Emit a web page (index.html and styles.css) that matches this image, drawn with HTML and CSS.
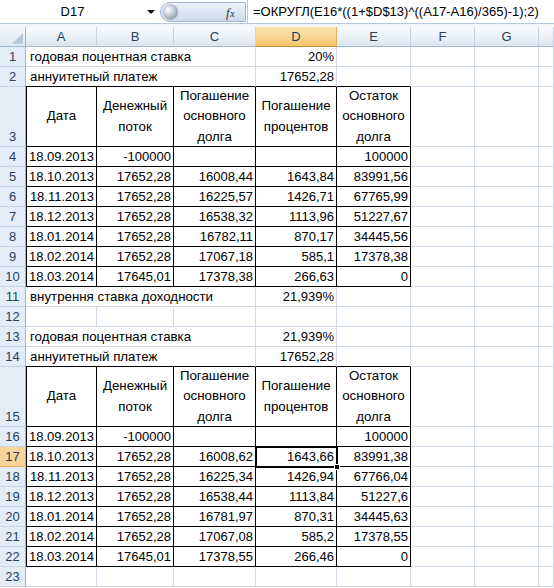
FILE: index.html
```html
<!DOCTYPE html>
<html>
<head>
<meta charset="utf-8">
<link rel="stylesheet" href="styles.css">
</head>
<body>
<div class="fbar">
  <div class="namebox">D17</div>
  <div class="ddarrow"><span class="tri"></span></div>
  <div class="pill">
    <svg width="86" height="22" viewBox="0 0 86 22">
      <defs>
        <linearGradient id="pg" x1="0" y1="0" x2="0" y2="1">
          <stop offset="0" stop-color="#eef3fa"/>
          <stop offset="1" stop-color="#cbd9ec"/>
        </linearGradient>
        <radialGradient id="cg" cx="0.35" cy="0.35" r="0.7">
          <stop offset="0" stop-color="#ffffff"/>
          <stop offset="0.5" stop-color="#c9ced6"/>
          <stop offset="1" stop-color="#8f9aa8"/>
        </radialGradient>
      </defs>
      <path d="M10 1.5 H85.5 V20.5 H10 A9.5 9.5 0 0 1 10 1.5 Z" fill="url(#pg)" stroke="#a3b7d1"/>
      <circle cx="10.5" cy="11" r="7.5" fill="url(#cg)" stroke="#b4bfcc" stroke-width="0.8"/>
      <text x="66" y="15.5" font-family="Liberation Serif, serif" font-style="italic" font-size="13" fill="#333">f<tspan font-size="10" dx="0.5">x</tspan></text>
    </svg>
  </div>
  <div class="formula">=ОКРУГЛ(E16*((1+$D$13)^((A17-A16)/365)-1);2)</div>
</div>
<div class="gap"></div>
<div class="sheet">
  <!-- column header row -->
  <div class="corner"><span class="ctri"></span></div>
  <div class="ch">A</div><div class="ch">B</div><div class="ch">C</div><div class="ch sel">D</div><div class="ch">E</div><div class="ch">F</div><div class="ch">G</div><div class="ch"></div>

  <!-- 1 -->
  <div class="rh">1</div>
  <div class="c s3 t">годовая поцентная ставка</div><div class="c r">20%</div><div class="c"></div><div class="c"></div><div class="c"></div><div class="c"></div>
  <!-- 2 -->
  <div class="rh">2</div>
  <div class="c s3 t tbb">аннуитетный платеж</div><div class="c r tbb">17652,28</div><div class="c tbb"></div><div class="c"></div><div class="c"></div><div class="c"></div>
  <!-- 3 -->
  <div class="rh">3</div>
  <div class="c tb tl th">Дата</div><div class="c tb th">Денежный<br>поток</div><div class="c tb th">Погашение<br>основного<br>долга</div><div class="c tb th">Погашение<br>процентов</div><div class="c tb th">Остаток<br>основного<br>долга</div><div class="c"></div><div class="c"></div><div class="c"></div>
  <!-- 4 -->
  <div class="rh">4</div>
  <div class="c r tb tl">18.09.2013</div><div class="c r tb">-100000</div><div class="c r tb"></div><div class="c r tb"></div><div class="c r tb">100000</div><div class="c"></div><div class="c"></div><div class="c"></div>
  <!-- 5 -->
  <div class="rh">5</div>
  <div class="c r tb tl">18.10.2013</div><div class="c r tb">17652,28</div><div class="c r tb">16008,44</div><div class="c r tb">1643,84</div><div class="c r tb">83991,56</div><div class="c"></div><div class="c"></div><div class="c"></div>
  <!-- 6 -->
  <div class="rh">6</div>
  <div class="c r tb tl">18.11.2013</div><div class="c r tb">17652,28</div><div class="c r tb">16225,57</div><div class="c r tb">1426,71</div><div class="c r tb">67765,99</div><div class="c"></div><div class="c"></div><div class="c"></div>
  <!-- 7 -->
  <div class="rh">7</div>
  <div class="c r tb tl">18.12.2013</div><div class="c r tb">17652,28</div><div class="c r tb">16538,32</div><div class="c r tb">1113,96</div><div class="c r tb">51227,67</div><div class="c"></div><div class="c"></div><div class="c"></div>
  <!-- 8 -->
  <div class="rh">8</div>
  <div class="c r tb tl">18.01.2014</div><div class="c r tb">17652,28</div><div class="c r tb">16782,11</div><div class="c r tb">870,17</div><div class="c r tb">34445,56</div><div class="c"></div><div class="c"></div><div class="c"></div>
  <!-- 9 -->
  <div class="rh">9</div>
  <div class="c r tb tl">18.02.2014</div><div class="c r tb">17652,28</div><div class="c r tb">17067,18</div><div class="c r tb">585,1</div><div class="c r tb">17378,38</div><div class="c"></div><div class="c"></div><div class="c"></div>
  <!-- 10 -->
  <div class="rh">10</div>
  <div class="c r tb tl">18.03.2014</div><div class="c r tb">17645,01</div><div class="c r tb">17378,38</div><div class="c r tb">266,63</div><div class="c r tb">0</div><div class="c"></div><div class="c"></div><div class="c"></div>
  <!-- 11 -->
  <div class="rh">11</div>
  <div class="c s3 t">внутрення ставка доходности</div><div class="c r">21,939%</div><div class="c"></div><div class="c"></div><div class="c"></div><div class="c"></div>
  <!-- 12 -->
  <div class="rh">12</div>
  <div class="c"></div><div class="c"></div><div class="c"></div><div class="c"></div><div class="c"></div><div class="c"></div><div class="c"></div><div class="c"></div>
  <!-- 13 -->
  <div class="rh">13</div>
  <div class="c s3 t">годовая поцентная ставка</div><div class="c r">21,939%</div><div class="c"></div><div class="c"></div><div class="c"></div><div class="c"></div>
  <!-- 14 -->
  <div class="rh">14</div>
  <div class="c s3 t tbb">аннуитетный платеж</div><div class="c r tbb">17652,28</div><div class="c tbb"></div><div class="c"></div><div class="c"></div><div class="c"></div>
  <!-- 15 -->
  <div class="rh">15</div>
  <div class="c tb tl th">Дата</div><div class="c tb th">Денежный<br>поток</div><div class="c tb th">Погашение<br>основного<br>долга</div><div class="c tb th">Погашение<br>процентов</div><div class="c tb th">Остаток<br>основного<br>долга</div><div class="c"></div><div class="c"></div><div class="c"></div>
  <!-- 16 -->
  <div class="rh">16</div>
  <div class="c r tb tl">18.09.2013</div><div class="c r tb">-100000</div><div class="c r tb"></div><div class="c r tb"></div><div class="c r tb">100000</div><div class="c"></div><div class="c"></div><div class="c"></div>
  <!-- 17 -->
  <div class="rh rsel">17</div>
  <div class="c r tb tl">18.10.2013</div><div class="c r tb">17652,28</div><div class="c r tb">16008,62</div><div class="c r tb active">1643,66<span class="handle"></span></div><div class="c r tb">83991,38</div><div class="c"></div><div class="c"></div><div class="c"></div>
  <!-- 18 -->
  <div class="rh">18</div>
  <div class="c r tb tl">18.11.2013</div><div class="c r tb">17652,28</div><div class="c r tb">16225,34</div><div class="c r tb">1426,94</div><div class="c r tb">67766,04</div><div class="c"></div><div class="c"></div><div class="c"></div>
  <!-- 19 -->
  <div class="rh">19</div>
  <div class="c r tb tl">18.12.2013</div><div class="c r tb">17652,28</div><div class="c r tb">16538,44</div><div class="c r tb">1113,84</div><div class="c r tb">51227,6</div><div class="c"></div><div class="c"></div><div class="c"></div>
  <!-- 20 -->
  <div class="rh">20</div>
  <div class="c r tb tl">18.01.2014</div><div class="c r tb">17652,28</div><div class="c r tb">16781,97</div><div class="c r tb">870,31</div><div class="c r tb">34445,63</div><div class="c"></div><div class="c"></div><div class="c"></div>
  <!-- 21 -->
  <div class="rh">21</div>
  <div class="c r tb tl">18.02.2014</div><div class="c r tb">17652,28</div><div class="c r tb">17067,08</div><div class="c r tb">585,2</div><div class="c r tb">17378,55</div><div class="c"></div><div class="c"></div><div class="c"></div>
  <!-- 22 -->
  <div class="rh">22</div>
  <div class="c r tb tl">18.03.2014</div><div class="c r tb">17645,01</div><div class="c r tb">17378,55</div><div class="c r tb">266,46</div><div class="c r tb">0</div><div class="c"></div><div class="c"></div><div class="c"></div>
  <!-- 23 -->
  <div class="rh">23</div>
  <div class="c"></div><div class="c"></div><div class="c"></div><div class="c"></div><div class="c"></div><div class="c"></div><div class="c"></div><div class="c"></div>
</div>
</body>
</html>
```
FILE: styles.css
```css
* { box-sizing: border-box; }
html, body {
  margin: 0;
  padding: 0;
  width: 554px;
  height: 588px;
  overflow: hidden;
  background: #ffffff;
  font-family: "Liberation Sans", Arial, sans-serif;
  font-size: 13px;
  color: #000;
}
.fbar {
  height: 24px;
  display: flex;
  align-items: stretch;
  background: #ffffff;
  border-bottom: 1px solid #b9c9dd;
}
.namebox {
  width: 143px;
  text-align: center;
  line-height: 23px;
  padding-left: 2px;
}
.ddarrow {
  width: 16px;
  display: flex;
  align-items: center;
  justify-content: center;
}
.tri {
  width: 0;
  height: 0;
  border-left: 4px solid transparent;
  border-right: 4px solid transparent;
  border-top: 4px solid #111;
}
.pill {
  width: 88px;
  padding-top: 1px;
  padding-left: 1px;
}
.pill svg { display: block; }
.formula {
  flex: 1;
  min-width: 0;
  border-left: 1px solid #b9c9dd;
  padding-left: 5px;
  line-height: 23px;
  white-space: nowrap;
  overflow: hidden;
}
.gap {
  height: 3px;
  background: #f3f6fb;
}
.sheet {
  display: grid;
  width: 554px;
  overflow: hidden;
  grid-template-columns: 26px 71px 77px 82px 81px 74px 64px 64px 15px;
  grid-template-rows: 20px 20px 20px 60px repeat(11, 20px) 60px repeat(8, 20px);
}
.corner {
  position: relative;
  background: linear-gradient(#f4f7fb, #dfe7f2);
  border-right: 1px solid #9eb6ce;
  border-bottom: 1px solid #9eb6ce;
}
.ctri {
  position: absolute;
  right: 2px;
  bottom: 2px;
  width: 0;
  height: 0;
  border-left: 11px solid transparent;
  border-bottom: 11px solid #b5c7dc;
}
.ch {
  background: linear-gradient(#f8fafd 0%, #eaf0f8 55%, #dbe4f0 100%);
  border-right: 1px solid #c5d3e4;
  border-bottom: 1px solid #9eb6ce;
  text-align: center;
  line-height: 19px;
  color: #27415f;
}
.ch.sel {
  background: linear-gradient(#fbe2b0 0%, #f9d593 55%, #f2c466 100%);
  border-right-color: #e1b15c;
  border-bottom-color: #c2913f;
}
.rh {
  background: #e4ecf7;
  border-right: 1px solid #9eb6ce;
  border-bottom: 1px solid #c5d3e4;
  color: #27415f;
  text-align: center;
  display: flex;
  align-items: flex-end;
  justify-content: center;
  line-height: 19px;
}
.rh.rsel {
  background: #f8d49a;
  border-bottom-color: #e1b15c;
}
.c {
  border-right: 1px solid #d0d7e5;
  border-bottom: 1px solid #d0d7e5;
  padding: 0 2px 0 4px;
  line-height: 19px;
  white-space: nowrap;
  overflow: hidden;
}
.t { font-size: 13.3px; }
.s3 { grid-column: span 3; }
.r { text-align: right; }
.tb {
  border-right-color: #000;
  border-bottom-color: #000;
}
.tbb { border-bottom-color: #000; }
.tl { border-left: 1px solid #000; padding-left: 2px; }
.th {
  white-space: normal;
  text-align: center;
  display: flex;
  align-items: center;
  justify-content: center;
  line-height: 20.5px;
  padding: 0;
  font-size: 13.3px;
}
.active {
  position: relative;
  overflow: visible;
  outline: 2px solid #000;
  outline-offset: -1px;
  box-shadow: inset 0 0 0 2px #fff;
  z-index: 2;
}
.handle {
  position: absolute;
  right: -4px;
  bottom: -4px;
  width: 6px;
  height: 6px;
  background: #000;
  border: 1px solid #fff;
}
```
